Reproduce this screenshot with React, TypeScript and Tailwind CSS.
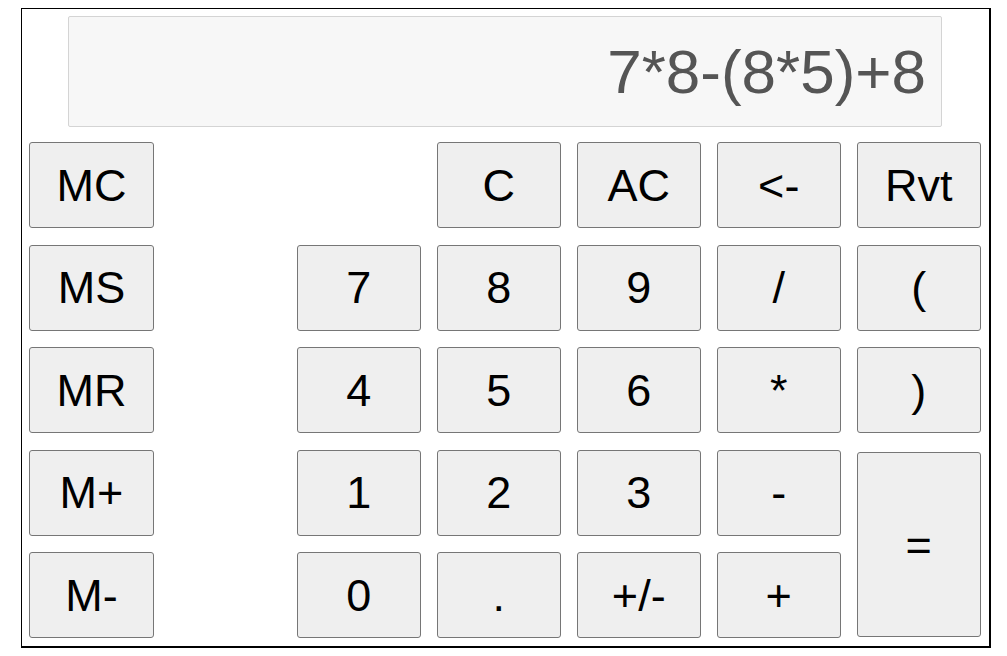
import React from "react";

const btn =
  "flex items-center justify-center bg-[#efefef] border border-[#767676] rounded-[3px] text-[45px] leading-none text-black";

export default function App() {
  const mem = ["MC", "MS", "MR", "M+", "M-"];
  return (
    <div
      className="w-[1007px] h-[656px] bg-white pt-[8px] pl-[21px]"
      style={{ fontFamily: '"Liberation Sans", Arial, sans-serif' }}
    >
      <div className="w-[970px] h-[640px] border-l border-t border-r-2 border-b-2 border-black px-[7px] pt-[7px]">
        <div className="ml-[39px] w-[874px] h-[111px] bg-[#f7f7f7] border border-[#d4d4d4] rounded-[2px] flex items-center justify-end pr-[15px] text-[62px] text-[#555555] leading-none">
          7*8-(8*5)+8
        </div>
        <div className="flex justify-between mt-[15px] pr-[1px]">
          <div className="grid grid-rows-[repeat(5,86px)] gap-y-[16.5px] w-[125px]">
            {mem.map((m) => (
              <div key={m} className={btn}>
                {m}
              </div>
            ))}
          </div>
          <div className="grid grid-cols-[repeat(5,124.5px)] grid-rows-[repeat(5,86px)] gap-x-[15.5px] gap-y-[16.5px]">
            <div />
            <div className={btn}>C</div>
            <div className={btn}>AC</div>
            <div className={btn}>&lt;-</div>
            <div className={btn}>Rvt</div>

            <div className={btn}>7</div>
            <div className={btn}>8</div>
            <div className={btn}>9</div>
            <div className={btn}>/</div>
            <div className={btn}>(</div>

            <div className={btn}>4</div>
            <div className={btn}>5</div>
            <div className={btn}>6</div>
            <div className={btn}>*</div>
            <div className={btn}>)</div>

            <div className={btn}>1</div>
            <div className={btn}>2</div>
            <div className={btn}>3</div>
            <div className={btn}>-</div>
            <div className={`${btn} row-span-2 mt-[2px] mb-[1px]`}>=</div>

            <div className={btn}>0</div>
            <div className={btn}>.</div>
            <div className={btn}>+/-</div>
            <div className={btn}>+</div>
          </div>
        </div>
      </div>
    </div>
  );
}
